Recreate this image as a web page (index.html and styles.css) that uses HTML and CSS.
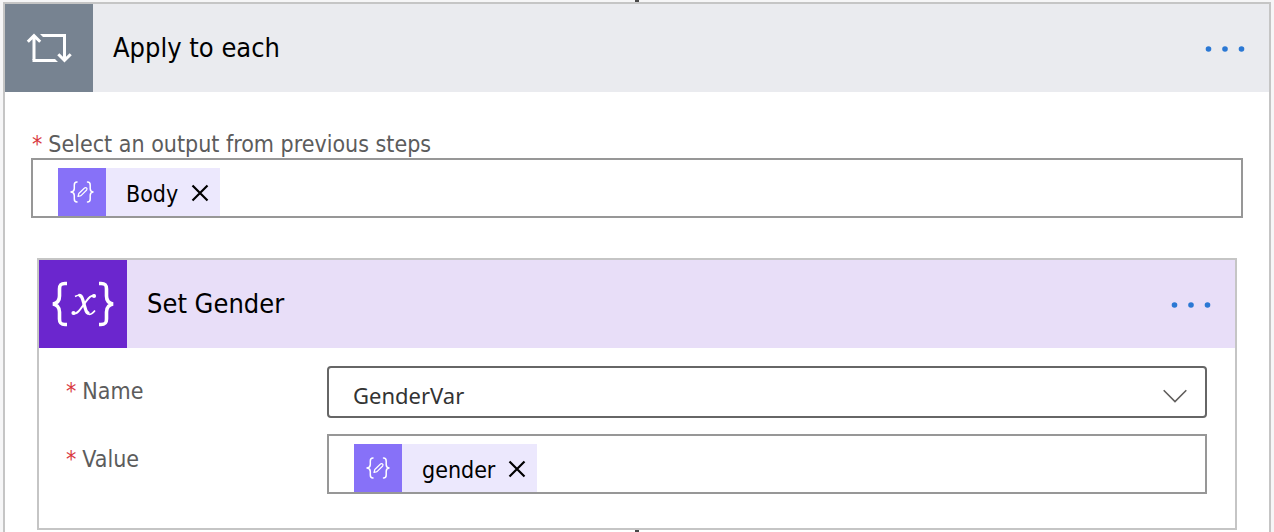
FILE: index.html
```html
<!DOCTYPE html>
<html lang="en">
<head>
    <meta charset="UTF-8">
    <meta name="viewport" content="width=device-width, initial-scale=1.0">
    <title>Apply to each</title>
    <link rel="stylesheet" href="styles.css">
</head>
<body>
    <svg class="sprite" width="0" height="0" aria-hidden="true">
        <symbol id="icon-expression" viewBox="0 0 24 22">
            <g fill="none" stroke="currentColor" stroke-linecap="round" stroke-linejoin="round">
                <path stroke-width="1.5" d="M7 1C4.500 1 4.300 2.300 4.300 4v3.500C4.300 9.500 3.500 10.700 1 11c2.500.3 3.300 1.500 3.300 3.500V18c0 1.700.2 3 2.700 3"/>
                <path stroke-width="1.5" d="M17.500 1c2.500 0 2.700 1.300 2.700 3v3.500c0 2 .8 3.200 2.800 3.500-2 .3-2.800 1.500-2.800 3.500V18c0 1.700-.2 3-2.700 3"/>
                <path stroke-width="1.200" d="M8 15.500l.8-3 5.700-5.500c1.500-1.200 3.300.5 2.200 2L11 14.600z"/>
            </g>
        </symbol>
        <symbol id="icon-close" viewBox="0 0 18 18">
            <path d="M1.500 1.500l15 15M16.500 1.500l-15 15" fill="none" stroke="currentColor" stroke-width="2.200"/>
        </symbol>
        <symbol id="icon-more" viewBox="0 0 40 8">
            <g fill="currentColor">
                <circle cx="3.500" cy="4" r="2.800"/>
                <circle cx="20" cy="4" r="2.800"/>
                <circle cx="36.500" cy="4" r="2.800"/>
            </g>
        </symbol>
    </svg>

    <main class="card loop-card">
        <span class="connector connector-top"></span>
        <header class="card-header">
            <div class="card-icon">
                <svg width="46" height="30" viewBox="0 0 46 30">
                    <path fill="none" stroke="#fff" stroke-width="3" d="M8 3v24M38.500 3v24M1.800 8.800L8 2.600l6.200 6.200M32.300 21.200l6.200 6.200 6.200-6.200"/>
                    <path fill="#fff" d="M14 1h26v3H17zM6.500 26H29l3 3H6.500z"/>
                </svg>
            </div>
            <h1 class="card-title">Apply to each</h1>
            <button class="more-button" aria-label="More commands"><svg width="40" height="8"><use href="#icon-more"/></svg></button>
        </header>
        <div class="loop-body">
            <label class="field-label" for="output-input"><span class="required">*</span>Select an output from previous steps</label>
            <div class="token-field">
                <span class="token">
                    <span class="token-icon"><svg width="24" height="22"><use href="#icon-expression"/></svg></span>
                    <span class="token-text">Body</span>
                    <button class="token-remove" aria-label="Remove Body"><svg width="18" height="18"><use href="#icon-close"/></svg></button>
                </span>
                <input class="token-input" id="output-input" type="text">
            </div>

            <section class="card action-card">
                <header class="card-header">
                    <div class="card-icon">
                        <svg width="64" height="46" viewBox="0 0 64 46" fill="none" stroke="#fff">
                            <path stroke-width="3.600" d="M16 2.500h-2C9.500 2.500 8.500 4 8.500 8v7c0 4.500-1.500 7-6.500 8 5 1 6.500 3.500 6.500 8v7c0 4 1 5.500 5.500 5.500h2"/>
                            <path stroke-width="3.600" d="M48 2.500h2c4.500 0 5.500 1.500 5.500 5.500v7c0 4.500 1.500 7 6.500 8-5 1-6.500 3.500-6.500 8v7c0 4-1 5.500-5.500 5.500h-2"/>
                            <path stroke-width="1.600" d="M24 15.500c2-1 4-1.500 5-1.500M44 29.500c-2 2.500-3.500 4-6 4"/>
                            <path stroke-width="3.200" d="M27.500 14.500c2.500-.5 3.500 1.500 4.200 4l2.600 9c.7 2.800 1.700 5 4.200 5"/>
                            <path stroke-width="2" d="M44 14.500c-4-.5-6 2-9 6l-5.500 7.500c-2.500 3.500-4 5-7.500 4.500"/>
                            <g fill="#fff" stroke="none"><circle cx="43" cy="15" r="2.100"/><circle cx="22.500" cy="32" r="2.100"/></g>
                        </svg>
                    </div>
                    <h2 class="card-title">Set Gender</h2>
                    <button class="more-button" aria-label="More commands"><svg width="40" height="8"><use href="#icon-more"/></svg></button>
                </header>
                <div class="action-body">
                    <div class="field-row">
                        <label class="field-label" for="variable-name"><span class="required">*</span>Name</label>
                        <div class="select-wrap">
                            <select class="name-select" id="variable-name">
                                <option>GenderVar</option>
                            </select>
                            <svg class="chevron" width="24" height="14" viewBox="0 0 24 14"><path d="M.7 1.200L12 12.500 23.300 1.200" fill="none" stroke="#605e5c" stroke-width="1.600"/></svg>
                        </div>
                    </div>
                    <div class="field-row">
                        <label class="field-label" for="value-input"><span class="required">*</span>Value</label>
                        <div class="token-field">
                            <span class="token">
                                <span class="token-icon"><svg width="24" height="22"><use href="#icon-expression"/></svg></span>
                                <span class="token-text">gender</span>
                                <button class="token-remove" aria-label="Remove gender"><svg width="18" height="18"><use href="#icon-close"/></svg></button>
                            </span>
                            <input class="token-input" id="value-input" type="text">
                        </div>
                    </div>
                </div>
                <span class="connector connector-bottom"></span>
            </section>
        </div>
    </main>
</body>
</html>
```

FILE: styles.css
```css
* {
    box-sizing: border-box;
}
body {
    margin: 0;
    padding: 2px 3px 0;
    background-color: #f6f6f7;
    font-family: "DejaVu Sans Condensed", Tahoma, sans-serif;
    font-size: 23px;
}
.sprite {
    position: absolute;
}
svg {
    display: block;
}
button {
    padding: 0;
    border: none;
    background: none;
    cursor: pointer;
}
.card {
    position: relative;
    border: 2px solid #c5c5c5;
    background-color: #fff;
}
.loop-card {
    border-bottom: none;
}
.card-header {
    display: flex;
    align-items: center;
    height: 88px;
    padding-right: 24px;
    background-color: #eaebef;
}
.card-icon {
    display: flex;
    align-items: center;
    justify-content: center;
    width: 88px;
    height: 88px;
    background-color: #778391;
}
.card-title {
    flex: 1;
    margin: 0;
    padding-left: 20px;
    font-size: 27px;
    font-weight: normal;
    line-height: 36px;
    color: #000;
}
.more-button {
    padding-top: 2px;
    color: #2b78d4;
}
.loop-body {
    padding: 38px 26px 2px;
}
.field-label {
    display: block;
    padding-left: 1px;
    line-height: 28px;
    color: #5c5c5c;
}
.required {
    margin-right: 6px;
    color: #d93a3f;
}
.token-field {
    display: flex;
    flex: 1;
    height: 60px;
    padding: 8px 25px 0;
    border: 2px solid #979797;
    background-color: #fff;
}
.token {
    display: flex;
    align-items: center;
    height: 48px;
    padding-right: 11px;
    background-color: #ece8fd;
}
.token-icon {
    display: flex;
    align-items: center;
    justify-content: center;
    width: 48px;
    height: 48px;
    background-color: #8771f8;
    color: #fff;
}
.token-text {
    padding: 4px 13px 0 20px;
    color: #000;
}
.token-remove {
    padding-top: 2px;
    color: #000;
}
.token-input {
    flex: 1;
    min-width: 0;
    border: none;
    outline: none;
    background: none;
    font: inherit;
}
.action-card {
    margin: 40px 6px 0;
}
.action-card .card-header {
    background-color: #e8def8;
}
.action-card .card-icon {
    background-color: #6b26ce;
}
.action-body {
    display: flex;
    flex-direction: column;
    gap: 16px;
    padding: 18px 28px 34px 26px;
}
.field-row {
    display: flex;
}
.field-row .field-label {
    width: 262px;
    padding-top: 11px;
}
.select-wrap {
    position: relative;
    flex: 1;
}
.name-select {
    appearance: none;
    display: block;
    width: 100%;
    height: 52px;
    padding: 6px 60px 0 24px;
    border: 2px solid #666;
    border-radius: 4px;
    background-color: #fff;
    font-family: "Noto Sans", "Segoe UI", sans-serif;
    font-size: 22px;
    color: #333;
}
.chevron {
    position: absolute;
    top: 23px;
    right: 20px;
    pointer-events: none;
}
.connector {
    position: absolute;
    left: 50%;
    width: 4px;
    height: 2px;
    margin-left: -2px;
    background-color: #484848;
}
.connector-top {
    top: -4px;
}
.connector-bottom {
    top: 100%;
    margin-top: 2px;
}
```
